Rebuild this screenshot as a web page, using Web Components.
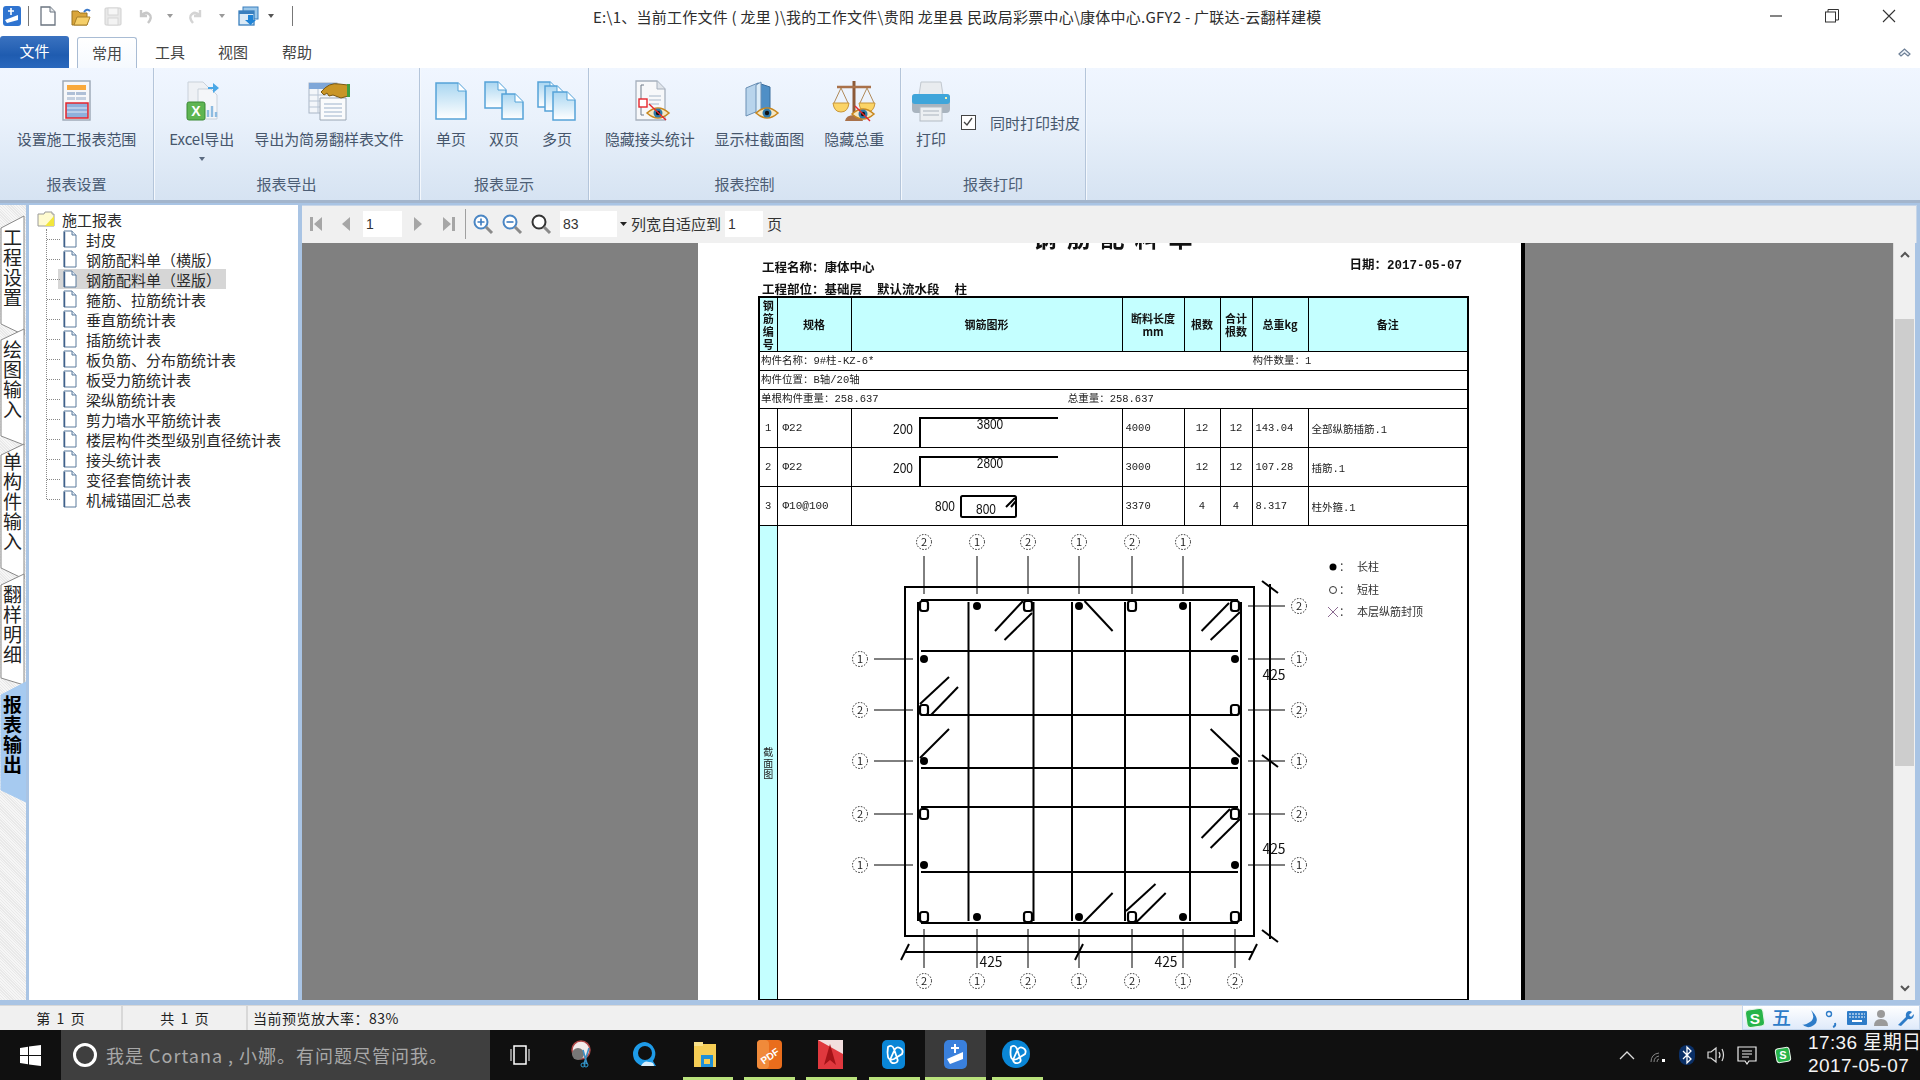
<!DOCTYPE html>
<html lang="zh">
<head>
<meta charset="utf-8">
<title>广联达-云翻样建模</title>
<style>
  html, body { margin: 0; height: 100%; overflow: hidden; background: #fff; }
  body { font-family: "Noto Sans CJK SC", "Liberation Sans", sans-serif; }
</style>
</head>
<body>
<gfy-app>
  <title-bar></title-bar>
  <ribbon-tabs></ribbon-tabs>
  <ribbon-bar>
    <ribbon-group caption="报表设置" w="154">
      <ribbon-button icon="setup" label="设置施工报表范围"></ribbon-button>
    </ribbon-group>
    <ribbon-group caption="报表导出" w="266" gap="20">
      <ribbon-button icon="excel" label="Excel导出" drop></ribbon-button>
      <ribbon-button icon="simple" label="导出为简易翻样表文件"></ribbon-button>
    </ribbon-group>
    <ribbon-group caption="报表显示" w="169" gap="9">
      <ribbon-button icon="one" label="单页"></ribbon-button>
      <ribbon-button icon="two" label="双页"></ribbon-button>
      <ribbon-button icon="many" label="多页"></ribbon-button>
    </ribbon-group>
    <ribbon-group caption="报表控制" w="312" gap="20">
      <ribbon-button icon="joint" label="隐藏接头统计"></ribbon-button>
      <ribbon-button icon="column" label="显示柱截面图"></ribbon-button>
      <ribbon-button icon="scale" label="隐藏总重"></ribbon-button>
    </ribbon-group>
    <ribbon-group caption="报表打印" w="185" align="start">
      <print-options></print-options>
    </ribbon-group>
  </ribbon-bar>
  <main-area>
    <side-tabs slot="side"></side-tabs>
    <report-tree slot="tree"></report-tree>
    <preview-toolbar slot="toolbar"></preview-toolbar>
    <preview-pane slot="preview"></preview-pane>
  </main-area>
  <status-bar></status-bar>
  <win-taskbar></win-taskbar>
</gfy-app>

<script>
const doc = (x, y, w, h, id) => `
  <path d="M${x} ${y}h${w - 8}l8 8v${h - 8}h-${w}z" fill="url(#${id})" stroke="#55a3d8" stroke-width="1.5"/>
  <path d="M${x + w - 8} ${y}v8h8" fill="#fff" stroke="#55a3d8"/>`;
const docGrad = id => `<defs><linearGradient id="${id}" x1="0" y1="0" x2="0" y2="1"><stop offset="0" stop-color="#a9d6f1"/><stop offset="1" stop-color="#fff"/></linearGradient></defs>`;
const eye = (x, y) => `
  <path d="M${x - 11} ${y}q11 -10 22 0q-11 10 -22 0z" fill="#f6e7c2" stroke="#c8871e" stroke-width="1.6"/>
  <circle cx="${x}" cy="${y}" r="4.5" fill="#2f78a8"/><circle cx="${x}" cy="${y}" r="2.2" fill="#111"/>`;

const ICONS = {
  setup: `<rect x="9" y="1" width="27" height="39" fill="#f6f7f9" stroke="#9aa6b4" stroke-width="1.4"/>
    <rect x="13" y="5" width="19" height="5" fill="#f9a93b"/>
    <rect x="13" y="12" width="8" height="3" fill="#aebfd6"/><rect x="22" y="12" width="10" height="3" fill="#aebfd6"/>
    <rect x="13" y="17" width="8" height="3" fill="#c3cfdf"/><rect x="22" y="17" width="10" height="3" fill="#c3cfdf"/>
    <rect x="12" y="23" width="22" height="15" fill="#8fb0dc" stroke="#e5262c" stroke-width="1.5"/>
    <path d="M13 28h20M13 32h20" stroke="#dfe9f6"/>`,
  excel: `<path d="M8 2h15l7 7v26H8z" fill="#eef1f5" stroke="#c9d1da"/><path d="M18 9h13l6 6v24H18z" fill="#f4f6f9" stroke="#c9d1da"/>
    <path d="M28 7h5V3l6 5-6 5V9h-5z" fill="#4aa7e6"/>
    <rect x="7" y="22" width="18" height="18" rx="2" fill="#5fb552" stroke="#3b8a35"/>
    <text x="16" y="36" text-anchor="middle" font-family="Liberation Sans" font-size="14" font-weight="700" fill="#fff">X</text>
    <path d="M28 37v-7M32 37v-11M36 37v-5" stroke="#8dbbe0" stroke-width="2.4"/>`,
  simple: `<rect x="2" y="3" width="28" height="30" fill="#f3f6fa" stroke="#a9b6c6"/><rect x="2" y="3" width="28" height="6" fill="#7fa7d8"/>
    <path d="M2 15h28M2 21h28M2 27h28M11 9v24" stroke="#b7c4d4"/>
    <path d="M13 18h26v22H13z" fill="#fafbfc" stroke="#9aa6b4"/><path d="M17 24h18M17 28h18M17 32h18M17 36h18" stroke="#9db2cb"/>
    <path d="M14 12q8 -10 18 -8l9 1v11l-7 2-8-3-4 1-2-3-3 2z" fill="#c99526" stroke="#7a5812"/>
    <rect x="40" y="4" width="3" height="13" fill="#3f9e3f"/>`,
  one: docGrad('g1') + doc(7, 3, 30, 36, 'g1'),
  two: docGrad('g2') + doc(3, 2, 21, 26, 'g2') + doc(20, 14, 21, 25, 'g2'),
  many: docGrad('g3') + doc(3, 2, 20, 25, 'g3') + doc(10, 6, 20, 25, 'g3') + doc(18, 12, 22, 28, 'g3'),
  joint: `<path d="M8 1h21l8 8v31H8z" fill="#f7f8fa" stroke="#a6b0bd" stroke-width="1.3"/><path d="M29 1v8h8" fill="#dfe4ea" stroke="#a6b0bd"/>
    <path d="M16 5h-3v30h3" fill="none" stroke="#6f7a88"/><path d="M21 16h12M21 20h12M21 24h10" stroke="#a8b8ca"/>
    <rect x="11" y="19" width="8" height="8" fill="#fff" stroke="#e5262c" stroke-width="1.4"/>` + eye(30, 33) + `<path d="M21 24l17 16" stroke="#e5262c" stroke-width="1.4"/>`,
  column: `<path d="M9 8l12-5v28l-12 5z" fill="#b8d4ec" stroke="#6a8fb4"/><path d="M21 3l12 4v27l-12-3z" fill="#4f8fc6" stroke="#3b6e9e"/>
    <path d="M19 5l5-3v28l-5 3z" fill="#dcecf8" stroke="#6a8fb4"/>` + eye(30, 33),
  scale: `<path d="M22 1v33" stroke="#8c5a38" stroke-width="3"/><path d="M5 7h34" stroke="#a9714a" stroke-width="2.4"/>
    <path d="M9 8l-7 15M9 8l7 15M35 8l-7 15M35 8l7 15" stroke="#b08a5a"/>
    <path d="M1 23h16q-1 9-8 9t-8-9zM27 23h16q-1 9-8 9t-8-9z" fill="#fbd466" stroke="#c8963a"/>
    <path d="M13 41q1-6 9-6t9 6z" fill="#a9714a"/>` + eye(31, 34) + `<path d="M23 26l15 15" stroke="#e5262c" stroke-width="1.4"/>`,
  printer: `<path d="M12 2h20l2 13H10z" fill="#e9ecef" stroke="#c2c8cf"/>
    <rect x="3" y="14" width="38" height="19" rx="4" fill="#a9b4bf"/><rect x="3" y="14" width="38" height="10" rx="3" fill="#3fa5da"/>
    <rect x="36" y="17" width="2" height="2" fill="#f2f2b0"/><rect x="11" y="27" width="22" height="14" fill="#eceff2" stroke="#b3bbc4"/>
    <path d="M14 31h16M14 35h16" stroke="#aab3bd"/>`
};

class GfyApp extends HTMLElement {
  constructor() {
    super();
    this.attachShadow({ mode: 'open' }).innerHTML = `
      <style>:host { display: flex; flex-direction: column; width: 1920px; height: 1080px; overflow: hidden; background: #fff; }</style>
      <slot></slot>`;
  }
}

class TitleBar extends HTMLElement {
  constructor() {
    super();
    this.attachShadow({ mode: 'open' }).innerHTML = `
      <style>
        :host { display: flex; align-items: center; height: 34px; flex: none; box-sizing: border-box; padding-bottom: 2px; background: #fff; font-size: 15px; color: #2d2d2d; }
        svg { display: block; flex: none; }
        .sep { width: 1px; height: 20px; background: #777; flex: none; }
        .title { margin-left: 300px; white-space: nowrap; letter-spacing: .25px; }
        .win { margin-left: auto; display: flex; padding-right: 3px; }
        .win div { width: 56.5px; display: flex; justify-content: center; }
      </style>
      <svg style="margin-left:2px" width="20" height="22" viewBox="0 0 20 22"><rect x="1" y="1" width="18" height="20" rx="3" fill="#2f74d0"/><path d="M3 15l13-5v5l-11 3z" fill="#fff"/><path d="M9 3v7M6 6h6" stroke="#fff" stroke-width="1.6"/></svg>
      <div class="sep" style="margin-left:6px"></div>
      <svg style="margin-left:11px" width="16" height="20" viewBox="0 0 16 20"><path d="M1 1h9l5 5v13H1z" fill="#fff" stroke="#6b7480" stroke-width="1.3"/><path d="M10 1v5h5" fill="#e8ebee" stroke="#6b7480"/></svg>
      <svg style="margin-left:15px" width="20" height="19" viewBox="0 0 20 19"><path d="M1 4h6l2 2h7v12H1z" fill="#d9a53a" stroke="#9a7420"/><path d="M3 18l3-8h13l-3 8z" fill="#f5cf6a" stroke="#a9812a"/><path d="M13 5q3-4 6-1" stroke="#3b79c9" stroke-width="2" fill="none"/></svg>
      <svg style="margin-left:13px" width="18" height="19" viewBox="0 0 18 19"><rect x="1" y="1" width="16" height="17" rx="1" fill="#e8e8e8" stroke="#d0d0d0"/><rect x="4" y="1" width="10" height="7" fill="#f6f6f6" stroke="#d6d6d6"/><rect x="4" y="11" width="10" height="7" fill="#f3f3f3" stroke="#d6d6d6"/></svg>
      <svg style="margin-left:15px" width="16" height="17" viewBox="0 0 16 17"><path d="M4 2v6h6M4 8q4-5 8-2t-1 9" fill="none" stroke="#c8c8c8" stroke-width="2.4"/></svg>
      <svg style="margin-left:13px" width="8" height="5" viewBox="0 0 8 5"><path d="M1 0h6l-3 4z" fill="#9a9a9a"/></svg>
      <svg style="margin-left:14px" width="16" height="17" viewBox="0 0 16 17"><path d="M12 2v6H6M12 8q-4-5-8-2t1 9" fill="none" stroke="#d4d4d4" stroke-width="2.4"/></svg>
      <svg style="margin-left:14px" width="8" height="5" viewBox="0 0 8 5"><path d="M1 0h6l-3 4z" fill="#9a9a9a"/></svg>
      <svg style="margin-left:12px" width="22" height="20" viewBox="0 0 22 20"><rect x="5" y="1" width="15" height="12" fill="#9cc8ea" stroke="#3a7fbe"/><rect x="1" y="5" width="15" height="14" fill="#dbeaf6" stroke="#3a7fbe" stroke-width="1.3"/><rect x="1" y="5" width="15" height="3" fill="#3a7fbe"/><path d="M10 9h5v5h3l-5.500 5-5.500-5h3z" fill="#1f83d6"/></svg>
      <svg style="margin-left:7px" width="8" height="5" viewBox="0 0 8 5"><path d="M1 0h6l-3 4z" fill="#555"/></svg>
      <div class="sep" style="margin-left:17px"></div>
      <span class="title">E:\\1、当前工作文件 ( 龙里 )\\我的工作文件\\贵阳 龙里县 民政局彩票中心\\康体中心.GFY2 - 广联达-云翻样建模</span>
      <div class="win">
        <div><svg width="14" height="14" viewBox="0 0 14 14"><path d="M1 7h12" stroke="#333" stroke-width="1.2"/></svg></div>
        <div><svg width="14" height="14" viewBox="0 0 14 14"><rect x=".5" y="3" width="10" height="10" fill="none" stroke="#333"/><path d="M3 3V.5h10.500V11H10.500" fill="none" stroke="#333"/></svg></div>
        <div><svg width="14" height="14" viewBox="0 0 14 14"><path d="M1 1l12 12M13 1L1 13" stroke="#333" stroke-width="1.100"/></svg></div>
      </div>`;
  }
}

class RibbonTabs extends HTMLElement {
  constructor() {
    super();
    this.attachShadow({ mode: 'open' }).innerHTML = `
      <style>
        :host { display: flex; align-items: flex-end; height: 34px; flex: none; background: #fff; font-size: 15px; color: #444; position: relative; }
        .file { width: 69px; height: 32px; line-height: 30px; text-align: center; color: #fff; border-radius: 3px 3px 0 0; background: linear-gradient(#3a72c0, #1f5cb0 60%, #2a68bd); box-sizing: border-box; }
        .tab { height: 31px; line-height: 30px; text-align: center; }
        .on { width: 60px; margin-left: 8px; background: linear-gradient(#fff, #f5f9fe); border: 1px solid #a9bcd4; border-bottom: 0; border-radius: 3px 3px 0 0; box-sizing: border-box; }
        .collapse { position: absolute; right: 9px; top: 13px; }
      </style>
      <div class="file">文件</div>
      <div class="tab on">常用</div>
      <div class="tab" style="width:34px;margin-left:16px">工具</div>
      <div class="tab" style="width:34px;margin-left:29px">视图</div>
      <div class="tab" style="width:34px;margin-left:30px">帮助</div>
      <svg class="collapse" width="13" height="11" viewBox="0 0 13 11"><path d="M1 7l5.500-5 5.500 5-2 2-3.500-3-3.500 3z" fill="#eef2f7" stroke="#6d7f96" stroke-width="1.200"/></svg>`;
  }
}

class RibbonBar extends HTMLElement {
  constructor() {
    super();
    this.attachShadow({ mode: 'open' }).innerHTML = `
      <style>
        :host { display: flex; height: 132px; flex: none; box-sizing: content-box; background: linear-gradient(#f0f6ff, #e9f1fb 40%, #d6e3f2); border-top: 1px solid #a5b8d0; border-bottom: 3px solid #a3b5cc; }
      </style>
      <slot></slot>`;
    this.style.marginTop = '-1px';
  }
}

class RibbonGroup extends HTMLElement {
  constructor() {
    super();
    this.attachShadow({ mode: 'open' });
  }
  connectedCallback() {
    const gap = this.getAttribute('gap') || 0;
    const align = this.getAttribute('align') === 'start' ? 'flex-start' : 'center';
    this.shadowRoot.innerHTML = `
      <style>
        :host { display: flex; flex-direction: column; flex: none; box-sizing: border-box; width: ${this.getAttribute('w')}px; border-right: 1px solid #b4c5da; box-shadow: 1px 0 0 #f4f8fd; padding-top: 12px; }
        .body { flex: 1; display: flex; justify-content: ${align}; gap: ${gap}px; align-items: flex-start; }
        .cap { height: 30px; line-height: 28px; text-align: center; font-size: 15px; color: #4d5e75; }
      </style>
      <div class="body"><slot></slot></div>
      <div class="cap">${this.getAttribute('caption')}</div>`;
  }
}

class RibbonButton extends HTMLElement {
  constructor() {
    super();
    this.attachShadow({ mode: 'open' });
  }
  connectedCallback() {
    const drop = this.hasAttribute('drop');
    this.shadowRoot.innerHTML = `
      <style>
        :host { display: flex; flex-direction: column; align-items: center; font-size: 15px; color: #46566c; }
        svg { display: block; }
        .label { height: 20px; line-height: 20px; margin-top: 5px; white-space: nowrap; letter-spacing: -.05px; }
        .drop { width: 0; height: 0; margin-top: 8px; border: 3.500px solid transparent; border-top: 4px solid #5a6a80; border-bottom: 0; }
      </style>
      <svg width="44" height="44" viewBox="0 0 44 44">${ICONS[this.getAttribute('icon')]}</svg>
      <div class="label">${this.getAttribute('label')}</div>
      ${drop ? '<div class="drop"></div>' : ''}`;
  }
}

class PrintOptions extends HTMLElement {
  constructor() {
    super();
    this.attachShadow({ mode: 'open' }).innerHTML = `
      <style>
        :host { display: flex; align-items: flex-start; padding-left: 8px; font-size: 15px; color: #46566c; }
        .btn { display: flex; flex-direction: column; align-items: center; }
        .btn span { height: 20px; line-height: 20px; margin-top: 5px; }
        .chk { display: flex; align-items: center; margin-left: 8px; margin-top: 30px; height: 24px; white-space: nowrap; }
        .box { width: 15px; height: 15px; box-sizing: border-box; border: 1.500px solid #444; background: #fff; margin-right: 14px; }
        .box svg { display: block; }
      </style>
      <div class="btn"><svg width="44" height="44" viewBox="0 0 44 44">${ICONS.printer}</svg><span>打印</span></div>
      <div class="chk"><div class="box"><svg width="12" height="12" viewBox="0 0 12 12"><path d="M2 6l3 3 5-7" fill="none" stroke="#444" stroke-width="1.300"/></svg></div>同时打印封皮</div>`;
  }
}

class MainArea extends HTMLElement {
  constructor() {
    super();
    this.attachShadow({ mode: 'open' }).innerHTML = `
      <style>
        :host { display: grid; flex: none; height: 802px; grid-template-columns: 26px 272px 1fr; grid-template-rows: 38px 1fr; background: #a9c4e4; box-sizing: border-box; padding: 2px 0 5px; }
        .side { grid-row: 1 / 3; min-height: 0; }
        .tree { grid-row: 1 / 3; min-height: 0; }
        .bar { padding: 0 3px 0 4px; }
        .pre { padding: 0 5px 0 4px; min-height: 0; }
        ::slotted(*) { height: 100%; }
      </style>
      <div class="side"><slot name="side"></slot></div>
      <div class="tree"><slot name="tree"></slot></div>
      <div class="bar"><slot name="toolbar"></slot></div>
      <div class="pre"><slot name="preview"></slot></div>`;
  }
}

class SideTab extends HTMLElement {
  constructor() {
    super();
    this.attachShadow({ mode: 'open' });
  }
  connectedCallback() {
    const on = this.hasAttribute('active');
    const h = +this.getAttribute('h');
    const tl = +this.getAttribute('tl');
    const bl = +this.getAttribute('bl');
    const w = on ? 27 : 25;
    this.shadowRoot.innerHTML = `
      <style>
        :host { display: block; position: relative; height: ${h}px; width: ${w}px; margin-top: ${this.getAttribute('mt') || 0}px; }
        svg { position: absolute; inset: 0; }
        .t { position: relative; writing-mode: vertical-rl; letter-spacing: 1px; font-size: 19px; line-height: 25px; width: 25px; padding-top: ${this.getAttribute('pad')}px; color: #222; ${on ? 'font-weight: 700; color: #000;' : ''} }
      </style>
      <svg width="${w}" height="${h}"><polygon points="1,${tl} ${w - 1},1 ${w - 1},${h - 1} 1,${bl}" fill="${on ? '#a6caf0' : '#fff'}" stroke="${on ? '#a6caf0' : '#8a8a8a'}"/></svg>
      <div class="t">${this.getAttribute('text')}</div>`;
  }
}

class SideTabs extends HTMLElement {
  constructor() {
    super();
    this.attachShadow({ mode: 'open' }).innerHTML = `
      <style>
        :host { display: block; box-sizing: border-box; padding-top: 10px; background: repeating-linear-gradient(45deg, #f6f6f6 0 1px, #e9e9e9 1px 2px); overflow: hidden; }
      </style>
      <side-tab text="工程设置" h="121" tl="13" bl="109" pad="13"></side-tab>
      <side-tab text="绘图输入" h="118" tl="12" bl="108" mt="-8" pad="12"></side-tab>
      <side-tab text="单构件输入" h="137" tl="12" bl="125" mt="-3" pad="9"></side-tab>
      <side-tab text="翻样明细" h="113" tl="12" bl="105" mt="-7" pad="12"></side-tab>
      <side-tab text="报表输出" active h="122" tl="14" bl="109" mt="-5" pad="14"></side-tab>`;
  }
}

const TREE_ITEMS = ['封皮', '钢筋配料单（横版）', '钢筋配料单（竖版）', '箍筋、拉筋统计表', '垂直筋统计表', '插筋统计表',
  '板负筋、分布筋统计表', '板受力筋统计表', '梁纵筋统计表', '剪力墙水平筋统计表', '楼层构件类型级别直径统计表', '接头统计表', '变径套筒统计表', '机械锚固汇总表'];

class ReportTree extends HTMLElement {
  constructor() {
    super();
    this.attachShadow({ mode: 'open' });
  }
  connectedCallback() {
    this.render();
  }
  render = () => {
    const page = `<svg width="14" height="18" viewBox="0 0 14 18"><path d="M1 1h8l4 4v12H1z" fill="#fff" stroke="#5a7a9c"/><path d="M9 1v4h4" fill="#dfe8f2" stroke="#5a7a9c"/><path d="M1.500 17V2" stroke="#40608a" stroke-width="1.500"/></svg>`;
    this.shadowRoot.innerHTML = `
      <style>
        :host { display: block; background: #fff; margin-left: 3px; box-sizing: border-box; padding-top: 4px; font-size: 15px; color: #2a2a2a; overflow: hidden; }
        .root, .row { display: flex; align-items: center; height: 20px; white-space: nowrap; box-sizing: border-box; }
        .root { padding-left: 8px; }
        .root span { margin-left: 7px; }
        .list { position: relative; margin-left: 17px; border-left: 1px dotted #888; padding-left: 0; height: 270px; }
        .row { position: relative; padding-left: 16px; }
        .row::before { content: ""; width: 13px; margin-left: -16px; border-top: 1px dotted #888; margin-right: 3px; }
        .row span { margin-left: 9px; }
        .row.sel { background: linear-gradient(to right, transparent 11px, #d6d6d6 11px); width: 179px; }
        svg { display: block; flex: none; }
      </style>
      <div class="root"><svg width="18" height="16" viewBox="0 0 18 16"><path d="M1 3h6l1-2h7v2h2v12H1z" fill="#fffbd0" stroke="#9a9a9a"/><path d="M8 15l9-10v10z" fill="#f2e63c"/></svg><span>施工报表</span></div>
      <div class="list">
        ${TREE_ITEMS.map((t, i) => `<div class="row${i === 2 ? ' sel' : ''}">${page}<span>${t}</span></div>`).join('')}
      </div>`;
  };
}

class PreviewToolbar extends HTMLElement {
  constructor() {
    super();
    this.attachShadow({ mode: 'open' });
  }
  connectedCallback() {
    const lens = (inner, c) => `<svg width="22" height="22" viewBox="0 0 22 22"><circle cx="9" cy="9" r="6.500" fill="#fff" stroke="${c}" stroke-width="2"/>${inner}<path d="M14 14l6 6" stroke="#8a8a8a" stroke-width="3"/></svg>`;
    this.shadowRoot.innerHTML = `
      <style>
        :host { display: flex; align-items: center; background: #f0f0f0; box-sizing: border-box; font-size: 15px; color: #333; padding: 0 0 2px 7px; border-top: 1px solid #c8d6e8; border-right: 1px solid #c8d6e8; }
        svg { display: block; flex: none; }
        .in { background: #fff; height: 26px; line-height: 26px; box-sizing: border-box; padding-left: 3px; font-family: "Liberation Sans", sans-serif; font-size: 14px; flex: none; position: relative; }
        .sep { width: 1px; height: 30px; background: #a0a0a0; flex: none; }
        .arrow { position: absolute; right: 0; top: 0; bottom: 0; width: 12px; background: #f0f0f0; display: flex; align-items: center; justify-content: center; }
      </style>
      <svg width="14" height="16" viewBox="0 0 14 16"><path d="M1 1h3v14H1zM13 1v14L5 8z" fill="#a6a6a6"/></svg>
      <svg style="margin-left:18px" width="10" height="16" viewBox="0 0 10 16"><path d="M9 1v14L1 8z" fill="#a6a6a6"/></svg>
      <div class="in" style="width:39px;margin-left:12px">1</div>
      <svg style="margin-left:11px" width="10" height="16" viewBox="0 0 10 16"><path d="M1 1v14l8-7z" fill="#a6a6a6"/></svg>
      <svg style="margin-left:19px" width="14" height="16" viewBox="0 0 14 16"><path d="M13 1h-3v14h3zM1 1v14l8-7z" fill="#a6a6a6"/></svg>
      <div class="sep" style="margin-left:9px"></div>
      <div style="margin-left:6px">${lens('<path d="M5.500 9h7M9 5.500v7" stroke="#3d7cc0" stroke-width="1.600"/>', '#4a86c4')}</div>
      <div style="margin-left:7px">${lens('<path d="M5.500 9h7" stroke="#3d7cc0" stroke-width="1.600"/>', '#4a86c4')}</div>
      <div style="margin-left:7px">${lens('', '#333')}</div>
      <div class="in" style="width:69px;margin-left:8px;padding-left:3px">83<div class="arrow"><svg width="7" height="4" viewBox="0 0 7 4"><path d="M0 0h7L3.500 4z" fill="#222"/></svg></div></div>
      <span style="margin-left:2px;white-space:nowrap">列宽自适应到</span>
      <div class="in" style="width:38px;margin-left:4px">1</div>
      <span style="margin-left:4px">页</span>`;
  }
}

const DRAW_X = [924, 977, 1028, 1079, 1132, 1183, 1235];
const DRAW_Y = [605, 658, 709, 760, 813, 864, 916];

class RebarDrawing extends HTMLElement {
  constructor() {
    super();
    this.attachShadow({ mode: 'open' });
  }
  connectedCallback() {
    this.render();
  }
  line = (x1, y1, x2, y2, w = 2) => `<line x1="${x1}" y1="${y1}" x2="${x2}" y2="${y2}" stroke="#000" stroke-width="${w}"/>`;
  mark = (x, y, t) => `<circle cx="${x}" cy="${y}" r="7.500" fill="#fff" stroke="#222" stroke-dasharray="1.500 1.500"/><text x="${x}" y="${y + 4}" text-anchor="middle" font-size="11" fill="#222">${t}</text>`;
  bar = (x, y, sq) => sq
    ? `<rect x="${x - 4}" y="${y - 5}" width="8" height="10" rx="2.500" fill="#fff" stroke="#000" stroke-width="2.200"/>`
    : `<circle cx="${x}" cy="${y}" r="4" fill="#000"/>`;
  render = () => {
    const { line, mark, bar } = this;
    let s = '';
    s += `<rect x="905" y="586" width="349" height="349" fill="none" stroke="#000" stroke-width="2"/>`;
    [918, 968.500, 1033.500, 1072, 1125, 1190, 1241].forEach(x => { s += line(x, 601, x, 920); });
    [599, 650, 714, 767, 806, 871, 922].forEach(y => { s += line(921, y, 1238, y); });
    [[1023,600,995,630],[1032,612,1004.500,639],[1084.500,600,1112.600,630],[1229,602,1201.600,630],[1240,611,1210.600,639],
     [920,703,949,676],[931,714,958,686],[920,757,949,728],[1240,756,1210.600,728],[1230,808,1201.600,837],[1240,818,1210.600,847],
     [1083,922,1112.600,892],[1126,910,1155.500,883],[1135.500,922,1165.700,892]].forEach(h => { s += line(...h); });
    DRAW_X.forEach((x, i) => {
      s += bar(x, 605, i % 2 === 0) + bar(x, 916, i % 2 === 0);
      s += line(x, 928, x, 967, 1) + mark(x, 980, i % 2 ? 1 : 2);
      if (i < 6) s += line(x, 555, x, 593, 1) + mark(x, 541, i % 2 ? 1 : 2);
    });
    DRAW_Y.slice(1, 6).forEach((y, i) => {
      const sq = i % 2 === 1;
      s += bar(924, y, sq) + bar(1235, y, sq);
      s += line(874, y, 913, y, 1) + mark(860, y, sq ? 2 : 1);
      s += line(1248, y, 1285, y, 1) + mark(1299, y, sq ? 2 : 1);
    });
    s += line(1248, 605, 1285, 605, 1) + mark(1299, 605, 2);
    s += line(1270, 583, 1270, 938) + line(905, 951, 1253, 951);
    [586, 760, 935].forEach(y => { s += line(1262, y - 6, 1278, y + 6); });
    [905, 1079, 1253].forEach(x => { s += line(x + 4, 943, x - 4, 959); });
    [[1274, 679], [1274, 853], [991, 966], [1166, 966]].forEach(([x, y]) => {
      s += `<text x="${x}" y="${y}" text-anchor="middle" font-size="14" textLength="23" lengthAdjust="spacingAndGlyphs" fill="#111">425</text>`;
    });
    s += `<circle cx="1333" cy="566" r="3.500" fill="#000"/><circle cx="1333" cy="589" r="3.500" fill="#fff" stroke="#333"/>
      <path d="M1328 606l10 10M1338 606l-10 10" stroke="#8a6a90"/>
      <g font-size="11" fill="#333"><text x="1339" y="570">：</text><text x="1339" y="593">：</text><text x="1339" y="615">：</text>
      <text x="1357" y="570">长柱</text><text x="1357" y="593">短柱</text><text x="1357" y="615">本层纵筋封顶</text></g>`;
    this.shadowRoot.innerHTML = `
      <style>:host { display: block; } svg { display: block; margin: -1px 0 0 -2px; font-family: "Noto Sans CJK SC", sans-serif; }</style>
      <svg width="691" height="474" viewBox="776 524 691 474">${s}</svg>`;
  };
}

class BarShape extends HTMLElement {
  constructor() {
    super();
    this.attachShadow({ mode: 'open' });
  }
  connectedCallback() {
    const t = this.getAttribute('type');
    const txt = (x, y, v) => `<text x="${x}" y="${y}" text-anchor="middle" font-size="14" textLength="${v.length * 6.600}" lengthAdjust="spacingAndGlyphs" fill="#111">${v}</text>`;
    const body = t === 'hoop'
      ? `<rect x="109" y="9" width="55" height="21" rx="1.500" fill="none" stroke="#000" stroke-width="2"/><path d="M154 20l9-9M159 20l5-6" stroke="#000" stroke-width="2"/>${txt(93, 24, '800')}${txt(134, 27, '800')}`
      : `<path d="M68 39V9h138" fill="none" stroke="#000" stroke-width="2"/>${txt(51, 25, '200')}${txt(138, 20, this.getAttribute('len'))}`;
    this.shadowRoot.innerHTML = `
      <style>:host { display: block; height: 38px; } svg { display: block; font-family: "Liberation Sans", sans-serif; }</style>
      <svg width="270" height="38" viewBox="0 0 270 38">${body}</svg>`;
  }
}

class ReportPage extends HTMLElement {
  constructor() {
    super();
    this.attachShadow({ mode: 'open' }).innerHTML = `
      <style>
        :host { display: block; flex: none; width: 827px; margin-left: 396px; box-sizing: border-box; background: #fff; border-right: 4px solid #000; font-size: 11px; color: #222; font-family: "Liberation Mono", "Noto Sans CJK SC", monospace; padding-left: 60px; overflow: hidden; filter: blur(.25px); }
        .title { margin-top: -24px; height: 28px; line-height: 28px; text-align: center; font: 700 24px "Noto Sans CJK SC", sans-serif; letter-spacing: 10px; padding-right: 44px; color: #111; }
        .h { display: flex; height: 17px; font: 700 12.500px/17px "Noto Sans CJK SC", sans-serif; padding-left: 4px; color: #111; width: 700px; white-space: pre; }
        .h b { margin-left: auto; font: 700 12.500px/17px "Liberation Mono", "Noto Sans CJK SC", monospace; }
        .h span { margin-left: 15px; }
        table { border-collapse: collapse; table-layout: fixed; width: 709px; margin-top: -1px; border: 2px solid #000; position: relative; }
        td { border: 1px solid #000; padding: 0; vertical-align: middle; overflow: hidden; }
        tr.head td { background: #c4ffff; height: 53px; text-align: center; font: 700 11px/13px "Noto Sans CJK SC", sans-serif; color: #111; }
        tr.info td { height: 18px; padding-left: 1px; font-size: 10.500px; line-height: 16px; white-space: pre; }
        tr.data td { height: 38px; font-size: 10.500px; padding-left: 3px; white-space: nowrap; }
        tr.data td.c { text-align: center; padding-left: 0; }
        tr.data td.fig { padding: 0; }
        tr.data td.spec { padding-left: 5px; font-size: 11px; }
        .side { background: #c4ffff; text-align: center; font: 10px/11px "Noto Sans CJK SC", sans-serif; height: 472px; }
        .side span { display: inline-block; width: 10px; }
      </style>
      <div class="title">钢筋配料单</div>
      <div class="h" style="margin-top:11px">工程名称：康体中心<b>日期：2017-05-07</b></div>
      <div class="h" style="margin-top:5px">工程部位：基础层<span>默认流水段</span><span>柱</span></div>
      <table>
        <colgroup><col style="width:18px"><col style="width:74px"><col style="width:271px"><col style="width:62px"><col style="width:36px"><col style="width:32px"><col style="width:56px"><col style="width:160px"></colgroup>
        <tr class="head"><td>钢<br>筋<br>编<br>号</td><td>规格</td><td>钢筋图形</td><td>断料长度<br>mm</td><td>根数</td><td>合计<br>根数</td><td>总重kg</td><td>备注</td></tr>
        <tr class="info"><td colspan="8">构件名称：9#柱-KZ-6*                                                            构件数量：1</td></tr>
        <tr class="info"><td colspan="8">构件位置：B轴/20轴</td></tr>
        <tr class="info"><td colspan="8">单根构件重量：258.637                              总重量：258.637</td></tr>
        <tr class="data"><td class="c">1</td><td class="spec">Φ22</td><td class="fig"><bar-shape type="bent" len="3800"></bar-shape></td><td>4000</td><td class="c">12</td><td class="c">12</td><td>143.04</td><td>全部纵筋插筋.1</td></tr>
        <tr class="data"><td class="c">2</td><td class="spec">Φ22</td><td class="fig"><bar-shape type="bent" len="2800"></bar-shape></td><td>3000</td><td class="c">12</td><td class="c">12</td><td>107.28</td><td>插筋.1</td></tr>
        <tr class="data"><td class="c">3</td><td class="spec">Φ10@100</td><td class="fig"><bar-shape type="hoop"></bar-shape></td><td>3370</td><td class="c">4</td><td class="c">4</td><td>8.317</td><td>柱外箍.1</td></tr>
        <tr><td class="side"><span>截面图</span></td><td colspan="7" style="height:472px;vertical-align:top"><rebar-drawing></rebar-drawing></td></tr>
      </table>`;
  }
}

class PreviewPane extends HTMLElement {
  constructor() {
    super();
    this.attachShadow({ mode: 'open' }).innerHTML = `
      <style>
        :host { display: flex; background: #808080; overflow: hidden; min-height: 0; }
        .view { flex: 1; display: flex; overflow: hidden; align-items: flex-start; min-width: 0; }
        .sb { width: 22px; flex: none; background: #f0f0f0; display: flex; flex-direction: column; border-left: 1px solid #dcdcdc; box-sizing: border-box; }
        .btn { height: 24px; display: flex; align-items: center; justify-content: center; flex: none; }
        .track { flex: 1; padding: 52px 0 210px; }
        .thumb { height: 100%; background: #cdcdcd; margin: 0 1px; }
      </style>
      <div class="view"><report-page></report-page></div>
      <div class="sb">
        <div class="btn"><svg width="10" height="8" viewBox="0 0 10 8"><path d="M1 6l4-4 4 4" fill="none" stroke="#555" stroke-width="2"/></svg></div>
        <div class="track"><div class="thumb"></div></div>
        <div class="btn"><svg width="10" height="8" viewBox="0 0 10 8"><path d="M1 2l4 4 4-4" fill="none" stroke="#555" stroke-width="2"/></svg></div>
      </div>`;
  }
}

class StatusBar extends HTMLElement {
  constructor() {
    super();
    this.attachShadow({ mode: 'open' }).innerHTML = `
      <style>
        :host { display: flex; height: 25px; flex: none; background: #f0f0f0; font-size: 14px; color: #222; }
        .c { line-height: 25px; text-align: center; border-right: 2px solid #d8d8d8; border-top: 1px solid #d8d8d8; box-sizing: border-box; white-space: pre; }
        .z { padding-left: 5px; line-height: 25px; white-space: nowrap; border-top: 1px solid #d8d8d8; flex: 1; letter-spacing: .5px; }
        .ime { width: 178px; flex: none; display: flex; align-items: center; background: linear-gradient(#fff, #dfeafa); border: 1px solid #c4d6ec; box-sizing: border-box; position: relative; }
        .ime > * { position: absolute; top: 3px; }
      </style>
      <div class="c" style="width:123px">第  1  页</div>
      <div class="c" style="width:125px">共  1  页</div>
      <div class="z">当前预览放大率：83%</div>
      <div class="ime">
        <svg style="left:1px;top:1px" width="22" height="22" viewBox="0 0 20 20"><rect x="2" y="2" width="16" height="16" rx="3" fill="#27b44a" stroke="#e8f5ea" transform="rotate(-8 10 10)"/><text x="10" y="15" text-anchor="middle" font-size="14" font-weight="700" font-family="Liberation Sans" fill="#fff">S</text></svg>
        <span style="left:29px;top:-3px;font-size:19px;color:#2e7cc8;font-weight:500">五</span>
        <svg style="left:58px" width="18" height="20" viewBox="0 0 18 20"><path d="M10 1q5 8-1 12t-8 2q5 6 12 1t-3-15z" fill="#2e7cc8"/></svg>
        <svg style="left:82px" width="14" height="20" viewBox="0 0 14 20"><circle cx="4" cy="5" r="2.500" fill="none" stroke="#2e7cc8" stroke-width="1.400"/><path d="M10 14q1 3-2 4" stroke="#2e7cc8" stroke-width="2" fill="none"/></svg>
        <svg style="left:103px" width="22" height="18" viewBox="0 0 22 18"><rect x="1" y="2" width="20" height="14" rx="1" fill="#2e7cc8"/><path d="M3 5h16M3 8h16" stroke="#fff" stroke-dasharray="2 1"/><path d="M6 12h10" stroke="#fff" stroke-width="2"/></svg>
        <svg style="left:130px" width="16" height="18" viewBox="0 0 16 18"><circle cx="8" cy="5" r="4" fill="#9a9a9a"/><path d="M1 17q0-7 7-7t7 7z" fill="#9a9a9a"/></svg>
        <svg style="left:153px" width="18" height="18" viewBox="0 0 18 18"><path d="M2 16l8-8q-1-5 3-6 2 0 3 1l-3 3 2 2 3-3q0 6-6 5l-7 7z" fill="#2e7cc8"/></svg>
      </div>`;
  }
}

class WinTaskbar extends HTMLElement {
  constructor() {
    super();
    this.attachShadow({ mode: 'open' });
  }
  connectedCallback() {
    const apps = [
      [582, `<circle cx="14" cy="11" r="9" fill="#f2eaea" stroke="#b04848" stroke-width="1.500"/><circle cx="11" cy="15" r="6" fill="#777"/><path d="M16 11l4 14M22 9l-5 16" stroke="#3a8fc4" stroke-width="1.600"/><circle cx="19" cy="26" r="2" fill="none" stroke="#2f9ad0"/><circle cx="16" cy="26" r="2" fill="none" stroke="#2f9ad0"/>`],
      [645, `<path d="M15 3a12 12 0 1 0 0 24h11l-3-5a12 12 0 0 0-8-19z" fill="#1e9be8"/><circle cx="15" cy="14" r="7" fill="#101010"/><path d="M11 27q3-6 8-4 5 0 5 4z" fill="#d8eefb"/>`],
      [706, `<path d="M3 3h7l1 2h14v23H3z" fill="#f5cd55"/><rect x="3" y="3" width="9" height="4" fill="#f7e08a"/><rect x="10" y="16" width="12" height="12" fill="#1e90d8"/><rect x="13" y="20" width="6" height="5" fill="#f5cd55"/>`],
      [769, `<rect x="3" y="1" width="25" height="29" rx="4" fill="#e96d1c"/><rect x="3" y="1" width="12" height="29" rx="4" fill="#f08a3a"/><text x="15" y="21" text-anchor="middle" font-family="Liberation Sans" font-size="10" font-weight="700" fill="#fff" transform="rotate(-35 15 16)">PDF</text>`],
      [830, `<rect x="3" y="1" width="25" height="29" fill="#e0383e"/><path d="M3 1h25v14z" fill="#f2dede"/><path d="M15 5l6 21-6-5-6 5z" fill="#a41318"/>`],
      [893, `<rect x="4" y="1" width="23" height="29" rx="5" fill="#0a86d6"/><path d="M10 8q4-3 6 2l3 9q2 4-2 5t-5-3l4-9q2-5 6-3t2 6l-8 5q-5 2-6-2t0-10z" fill="none" stroke="#fff" stroke-width="1.800"/>`],
      [955, `<rect x="4" y="1" width="23" height="29" rx="5" fill="#3a80dc"/><path d="M7 20l16-7v7l-13 5z" fill="#fff"/><path d="M15 5v9M11 9h8" stroke="#fff" stroke-width="2"/>`],
      [1016, `<circle cx="15" cy="15" r="14" fill="#0a86d6"/><path d="M10 8q4-3 6 2l3 9q2 4-2 5t-5-3l4-9q2-5 6-3t2 6l-8 5q-5 2-6-2t0-10z" fill="none" stroke="#fff" stroke-width="1.800"/>`]
    ];
    const under = [[683, 50], [744, 51], [806, 51], [869, 51], [925, 61], [992, 51]];
    this.shadowRoot.innerHTML = `
      <style>
        :host { display: block; position: relative; height: 50px; flex: none; background: #101010; color: #fff; overflow: hidden; }
        .row { display: flex; height: 50px; align-items: center; }
        .search { margin-left: 61px; width: 429px; height: 50px; background: #3f3f3f; display: flex; align-items: center; padding-left: 11px; box-sizing: border-box; color: #a8a8a8; font-size: 18px; letter-spacing: 1px; white-space: nowrap; flex: none; }
        .search svg { margin-right: 8px; flex: none; }
        .abs { position: absolute; display: block; }
        .active { position: absolute; left: 925px; top: 0; width: 61px; height: 50px; background: #3a3a3a; }
        .u { position: absolute; top: 47px; height: 3px; background: #b9e27c; }
        .clock { position: absolute; left: 1808px; top: 1px; font: 19px/23px "Liberation Sans", "Noto Sans CJK SC", sans-serif; white-space: nowrap; color: #f4f4f4; letter-spacing: .4px; }
      </style>
      <div class="row"><div class="search">
        <svg width="26" height="26" viewBox="0 0 26 26"><circle cx="13" cy="13" r="10.500" fill="none" stroke="#fff" stroke-width="3"/></svg>
        <span>我是 Cortana , 小娜。有问题尽管问我。</span>
      </div></div>
      <svg class="abs" style="left:20px;top:15px" width="21" height="21" viewBox="0 0 21 21"><path d="M0 3l8-1.200V10H0zM9 1.600L21 0v10H9zM0 11h8v8.200L0 18zM9 11h12v10L9 19.400z" fill="#fff"/></svg>
      <svg class="abs" style="left:510px;top:15px" width="20" height="20" viewBox="0 0 20 20"><rect x="4" y="1" width="12" height="18" fill="none" stroke="#fff" stroke-width="1.500"/><path d="M1 4v12M19 4v12" stroke="#fff"/></svg>
      <div class="active"></div>
      ${under.map(([l, w]) => `<div class="u" style="left:${l}px;width:${w}px"></div>`).join('')}
      ${apps.map(([x, g]) => `<svg class="abs" style="left:${x - 15}px;top:9px" width="30" height="32" viewBox="0 0 30 32">${g}</svg>`).join('')}
      <svg class="abs" style="left:1619px;top:19px" width="16" height="12" viewBox="0 0 16 12"><path d="M1 10l7-7 7 7" fill="none" stroke="#ddd" stroke-width="1.300"/></svg>
      <svg class="abs" style="left:1650px;top:17px" width="16" height="16" viewBox="0 0 16 16"><path d="M1 15q0-8 8-9M4 15q0-5 5-6M7 15q0-3 2-3" fill="none" stroke="#888"/><rect x="12" y="12" width="3" height="3" fill="#fff"/></svg>
      <svg class="abs" style="left:1679px;top:15px" width="16" height="20" viewBox="0 0 16 20"><rect x="0" y="0" width="16" height="20" rx="8" fill="#0a2f66"/><path d="M4 6l8 8-4 4V2l4 4-8 8" fill="none" stroke="#fff" stroke-width="1.300"/></svg>
      <svg class="abs" style="left:1707px;top:16px" width="20" height="18" viewBox="0 0 20 18"><path d="M1 6h3l5-4v14l-5-4H1z" fill="none" stroke="#ddd" stroke-width="1.200"/><path d="M12 6q2 3 0 6M15 3q3 6 0 12" fill="none" stroke="#ddd" stroke-width="1.200"/></svg>
      <svg class="abs" style="left:1737px;top:16px" width="20" height="20" viewBox="0 0 20 20"><path d="M1 1h18v14h-7l-2 3-2-3H1z" fill="none" stroke="#eee" stroke-width="1.200"/><path d="M5 5h10M5 8h10M5 11h7" stroke="#eee"/></svg>
      <svg class="abs" style="left:1774px;top:16px" width="18" height="18" viewBox="0 0 18 18"><rect x="2" y="2" width="14" height="14" rx="3" fill="#27b44a" stroke="#e8f5ea" transform="rotate(-10 9 9)"/><text x="9" y="13" text-anchor="middle" font-size="11" font-weight="700" font-family="Liberation Sans" fill="#fff">S</text></svg>
      <div class="clock">17:36 星期日<br>2017-05-07</div>`;
  }
}

customElements.define('gfy-app', GfyApp);
customElements.define('title-bar', TitleBar);
customElements.define('ribbon-tabs', RibbonTabs);
customElements.define('ribbon-bar', RibbonBar);
customElements.define('ribbon-group', RibbonGroup);
customElements.define('ribbon-button', RibbonButton);
customElements.define('print-options', PrintOptions);
customElements.define('main-area', MainArea);
customElements.define('side-tab', SideTab);
customElements.define('side-tabs', SideTabs);
customElements.define('report-tree', ReportTree);
customElements.define('preview-toolbar', PreviewToolbar);
customElements.define('rebar-drawing', RebarDrawing);
customElements.define('bar-shape', BarShape);
customElements.define('report-page', ReportPage);
customElements.define('preview-pane', PreviewPane);
customElements.define('status-bar', StatusBar);
customElements.define('win-taskbar', WinTaskbar);
</script>
</body>
</html>
